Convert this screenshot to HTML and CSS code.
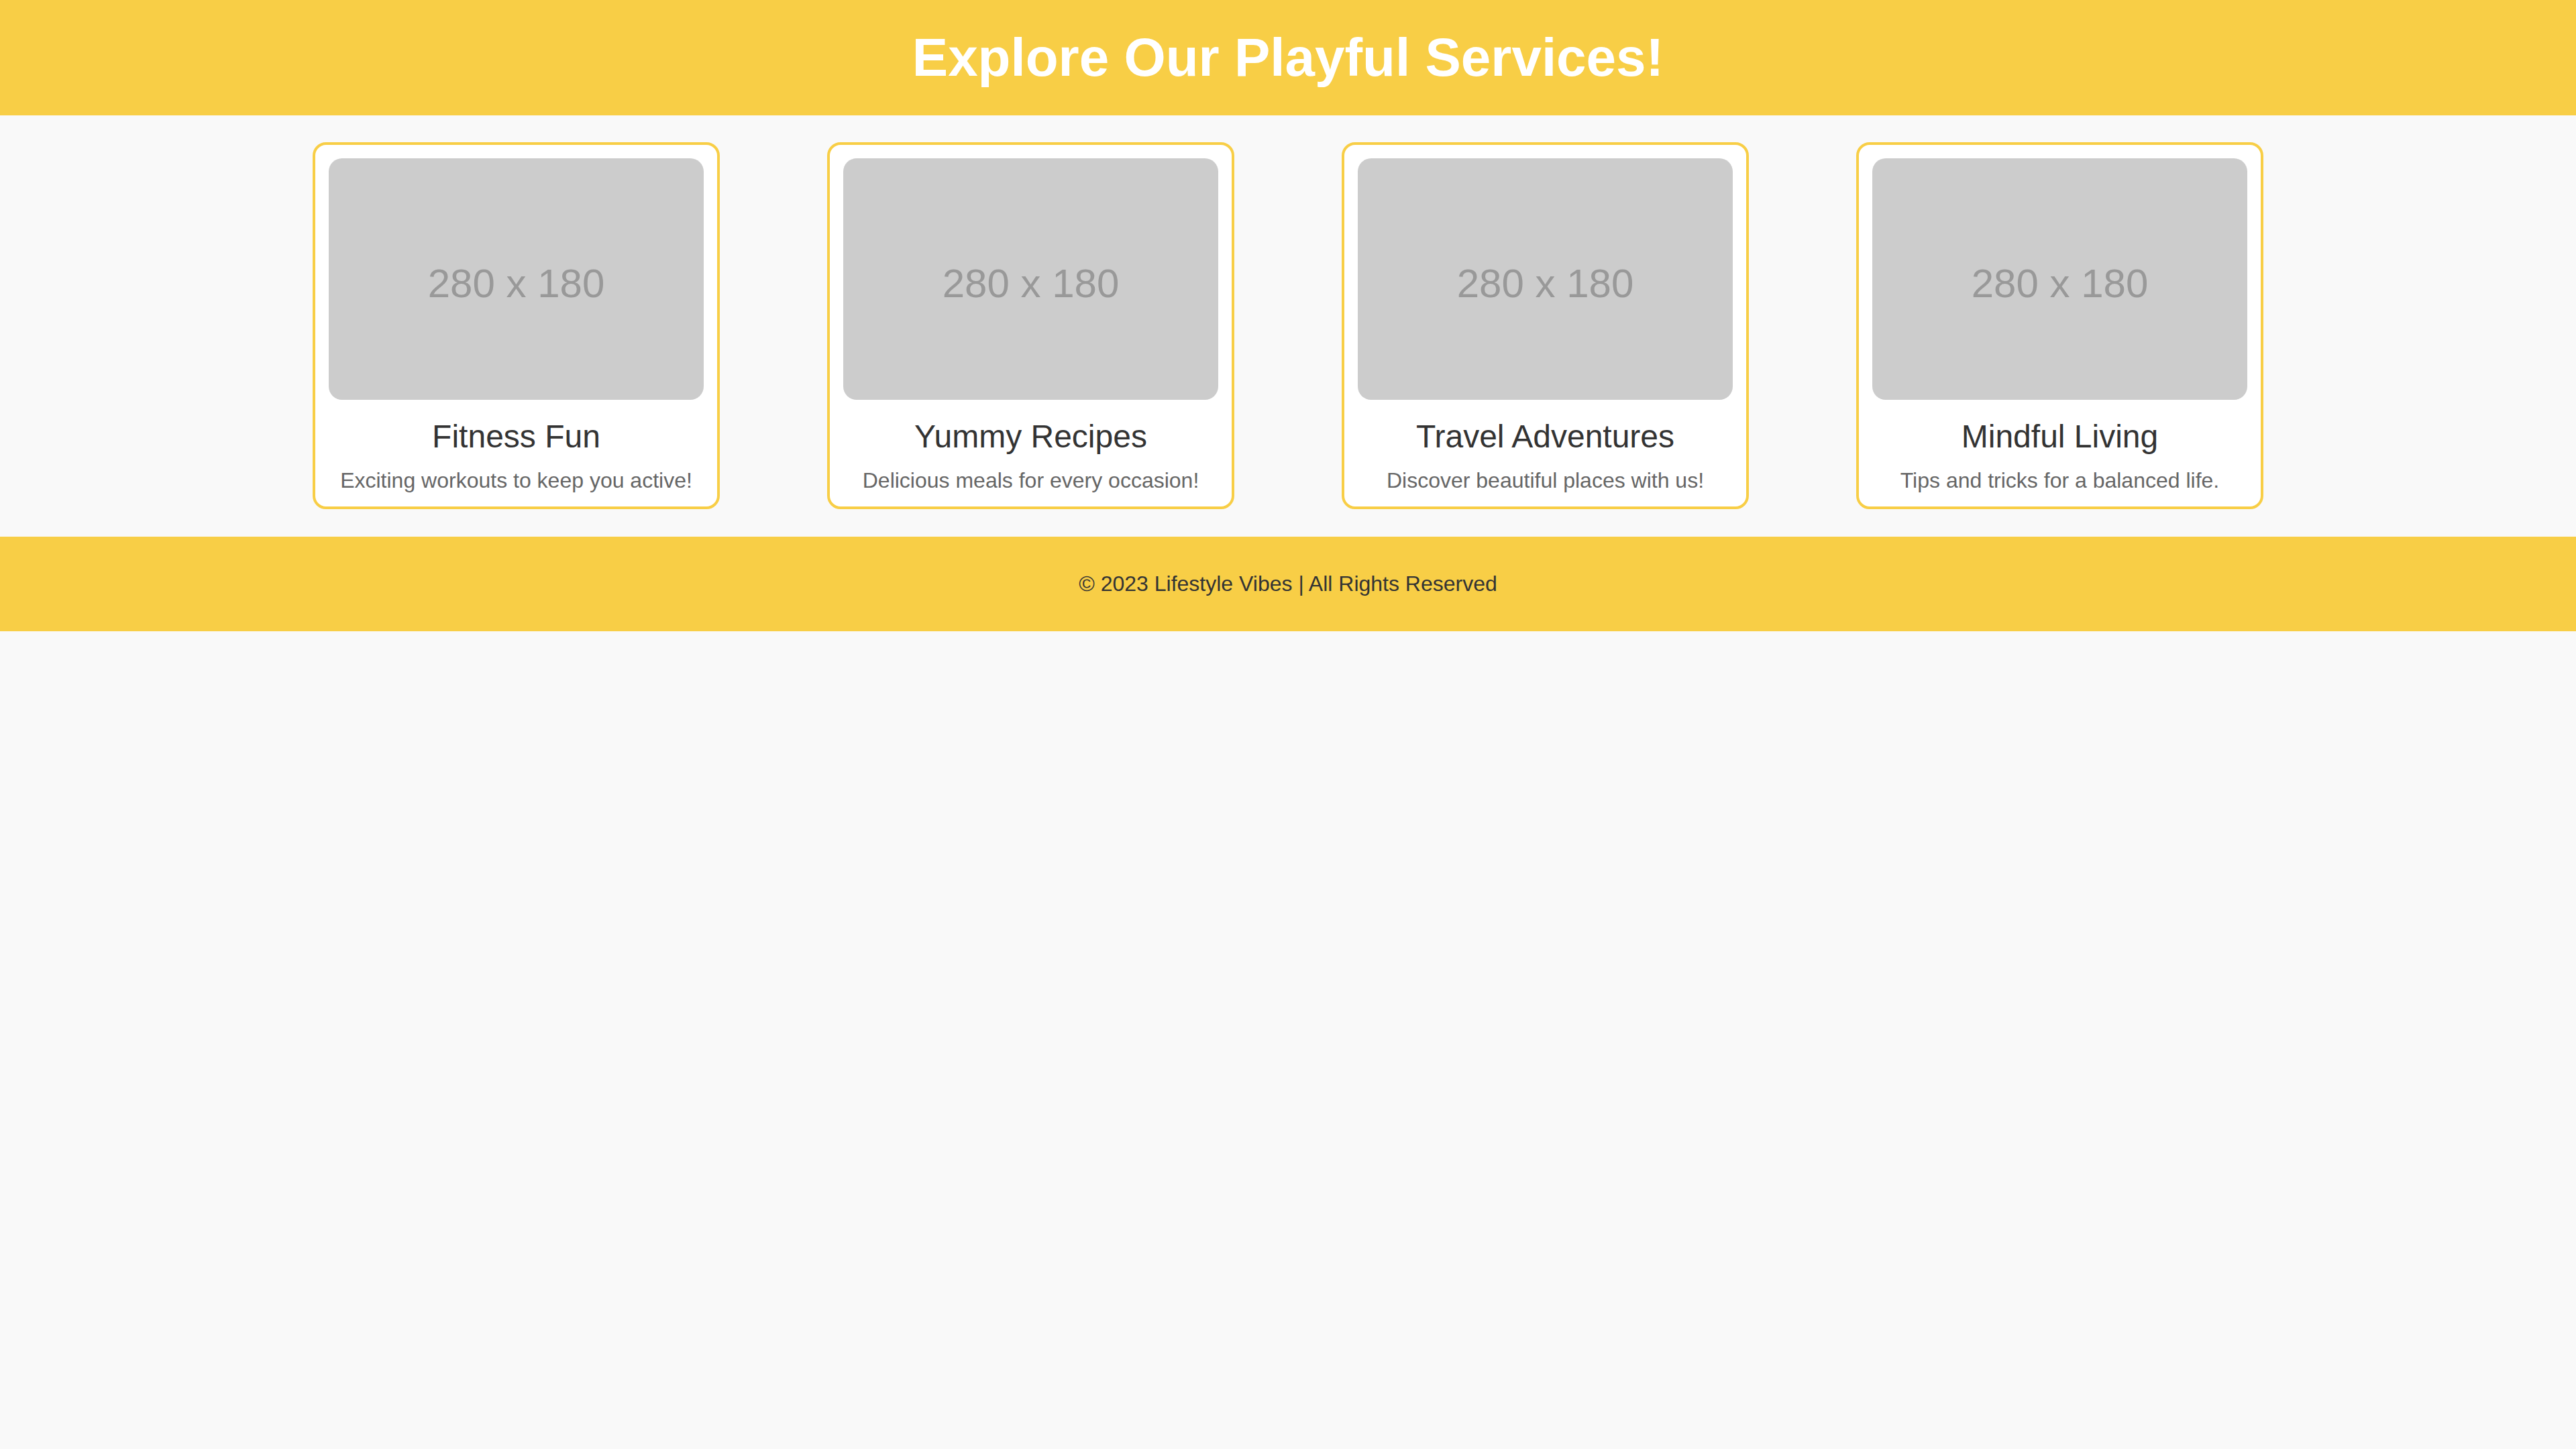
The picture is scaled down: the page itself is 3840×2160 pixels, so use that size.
FILE: index.html
```html
<!DOCTYPE html>
<html lang="en">
<head>
<meta charset="utf-8">
<title>Explore Our Playful Services!</title>
<link rel="stylesheet" href="styles.css">
</head>
<body>
<header class="site-header">
  <h1 class="site-title">Explore Our Playful Services!</h1>
</header>
<main class="services">
  <article class="card">
    <div class="placeholder">280 x 180</div>
    <h3 class="card-title">Fitness Fun</h3>
    <p class="card-text">Exciting workouts to keep you active!</p>
  </article>
  <article class="card">
    <div class="placeholder">280 x 180</div>
    <h3 class="card-title">Yummy Recipes</h3>
    <p class="card-text">Delicious meals for every occasion!</p>
  </article>
  <article class="card">
    <div class="placeholder">280 x 180</div>
    <h3 class="card-title">Travel Adventures</h3>
    <p class="card-text">Discover beautiful places with us!</p>
  </article>
  <article class="card">
    <div class="placeholder">280 x 180</div>
    <h3 class="card-title">Mindful Living</h3>
    <p class="card-text">Tips and tricks for a balanced life.</p>
  </article>
</main>
<footer class="site-footer">
  <p class="footer-text">© 2023 Lifestyle Vibes | All Rights Reserved</p>
</footer>
</body>
</html>
```

FILE: styles.css
```css
* {
  box-sizing: border-box;
}

html, body {
  margin: 0;
  padding: 0;
}

body {
  background: #f9f9f9;
  font-family: "Liberation Sans", Arial, sans-serif;
  color: #333;
}

.site-header {
  background: #f8ce46;
  padding: 40px 0;
  text-align: center;
}

.site-title {
  margin: 0;
  font-size: 80px;
  font-weight: bold;
  color: #ffffff;
  line-height: 92px;
}

.services {
  display: flex;
  justify-content: center;
  gap: 160px;
  padding: 40px 0 41px;
}

.card {
  width: 607px;
  background: #ffffff;
  border: 4px solid #f8ce46;
  border-radius: 20px;
  padding: 20px;
  text-align: center;
}

.placeholder {
  width: 559px;
  height: 360px;
  background: #cccccc;
  border-radius: 20px;
  color: #999999;
  font-size: 60px;
  display: flex;
  align-items: center;
  justify-content: center;
  padding-top: 12px;
}

.card-title {
  margin: 27px 0 20px;
  font-size: 48px;
  font-weight: normal;
  line-height: 55px;
  color: #333333;
}

.card-text {
  margin: 0;
  font-size: 32px;
  line-height: 37px;
  color: #666666;
}

.site-footer {
  background: #f8ce46;
  padding: 52px 0 53px;
  text-align: center;
}

.footer-text {
  margin: 0;
  font-size: 32px;
  line-height: 36px;
  color: #333333;
}
```
